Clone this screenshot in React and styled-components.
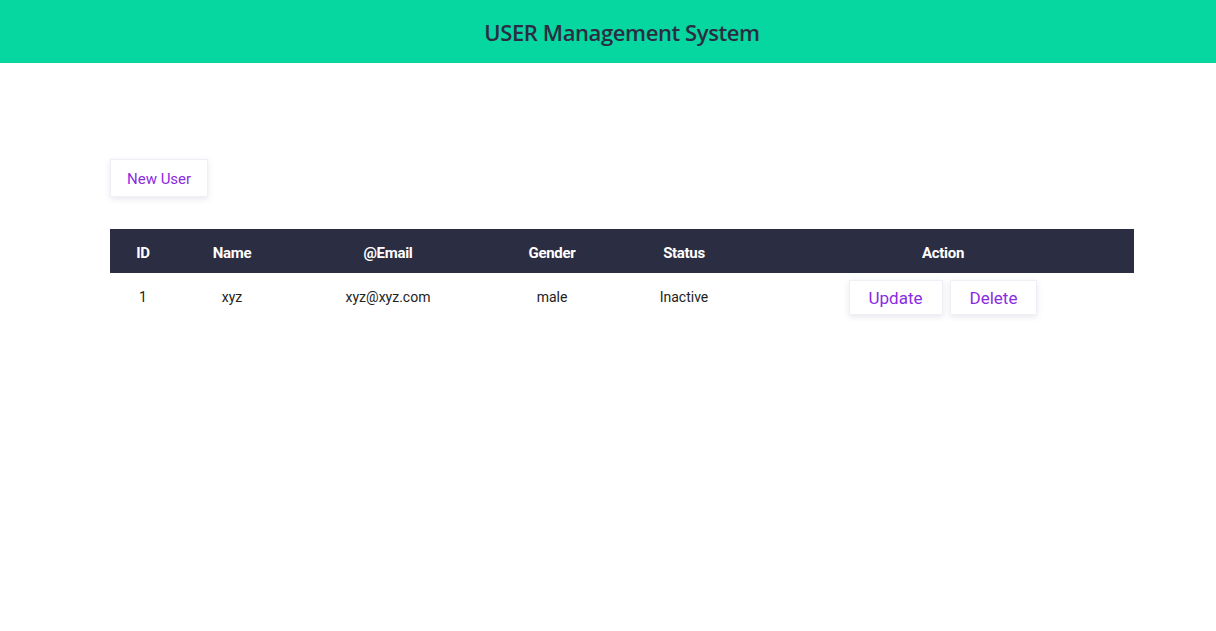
import styled, { createGlobalStyle } from "styled-components";

const GlobalStyle = createGlobalStyle`
  body {
    margin: 0;
    font-family: "Roboto", "Liberation Sans", sans-serif;
    background: #fff;
  }
`;

const Header = styled.header`
  height: 63px;
  background-color: #06d6a0;
  display: flex;
  align-items: center;
  justify-content: center;
  padding-left: 28px;
`;

const Title = styled.h1`
  margin: 0;
  padding-top: 1px;
  font-family: "Open Sans", "Noto Sans", sans-serif;
  font-size: 22px;
  font-weight: 600;
  color: #2b2d42;
  letter-spacing: -0.4px;
`;

const Main = styled.main`
  padding: 96px 82px 0 110px;
`;

const Button = styled.button`
  background: #fff;
  border: 1px solid #eef0f5;
  box-shadow: 0 2px 6px rgba(120, 130, 160, 0.18);
  color: #8a2be2;
  font-family: "Roboto", "Liberation Sans", sans-serif;
  font-size: ${(p) => (p.$big ? "17px" : "15px")};
  font-weight: 400;
  height: ${(p) => (p.$big ? "35px" : "38px")};
  padding: ${(p) => (p.$big ? "1px" : "2px")} ${(p) => p.$pad || 16}px 0;
  cursor: pointer;
`;

const Table = styled.table`
  margin-top: 32px;
  width: 1024px;
  border-collapse: collapse;
  table-layout: fixed;
`;

const Th = styled.th`
  background-color: #2b2d42;
  color: #fff;
  font-size: 15px;
  font-weight: 700;
  height: 44px;
  padding: 3px 0 0;
  box-sizing: border-box;
  text-align: center;
  letter-spacing: -0.3px;
`;

const Td = styled.td`
  color: #222;
  font-size: 14px;
  height: 48px;
  text-align: center;
  vertical-align: top;
  padding: 16px 0 0;
  box-sizing: border-box;
`;

const ActionCell = styled.td`
  padding: 7px 0 0;
  text-align: center;
  vertical-align: top;
`;

const Actions = styled.div`
  display: inline-flex;
  gap: 7px;
`;

const columns = [
  ["ID", 66],
  ["Name", 112],
  ["@Email", 200],
  ["Gender", 128],
  ["Status", 136],
  ["Action", 382],
];

const users = [
  { id: 1, name: "xyz", email: "xyz@xyz.com", gender: "male", status: "Inactive" },
];

export default function App() {
  return (
    <>
      <GlobalStyle />
      <Header>
        <Title>USER Management System</Title>
      </Header>
      <Main>
        <Button>New User</Button>
        <Table>
          <colgroup>
            {columns.map(([name, w]) => (
              <col key={name} style={{ width: w }} />
            ))}
          </colgroup>
          <thead>
            <tr>
              {columns.map(([name]) => (
                <Th key={name}>{name}</Th>
              ))}
            </tr>
          </thead>
          <tbody>
            {users.map((u) => (
              <tr key={u.id}>
                <Td>{u.id}</Td>
                <Td>{u.name}</Td>
                <Td>{u.email}</Td>
                <Td>{u.gender}</Td>
                <Td>{u.status}</Td>
                <ActionCell>
                  <Actions>
                    <Button $big $pad={19}>Update</Button>
                    <Button $big $pad={19}>Delete</Button>
                  </Actions>
                </ActionCell>
              </tr>
            ))}
          </tbody>
        </Table>
      </Main>
    </>
  );
}
